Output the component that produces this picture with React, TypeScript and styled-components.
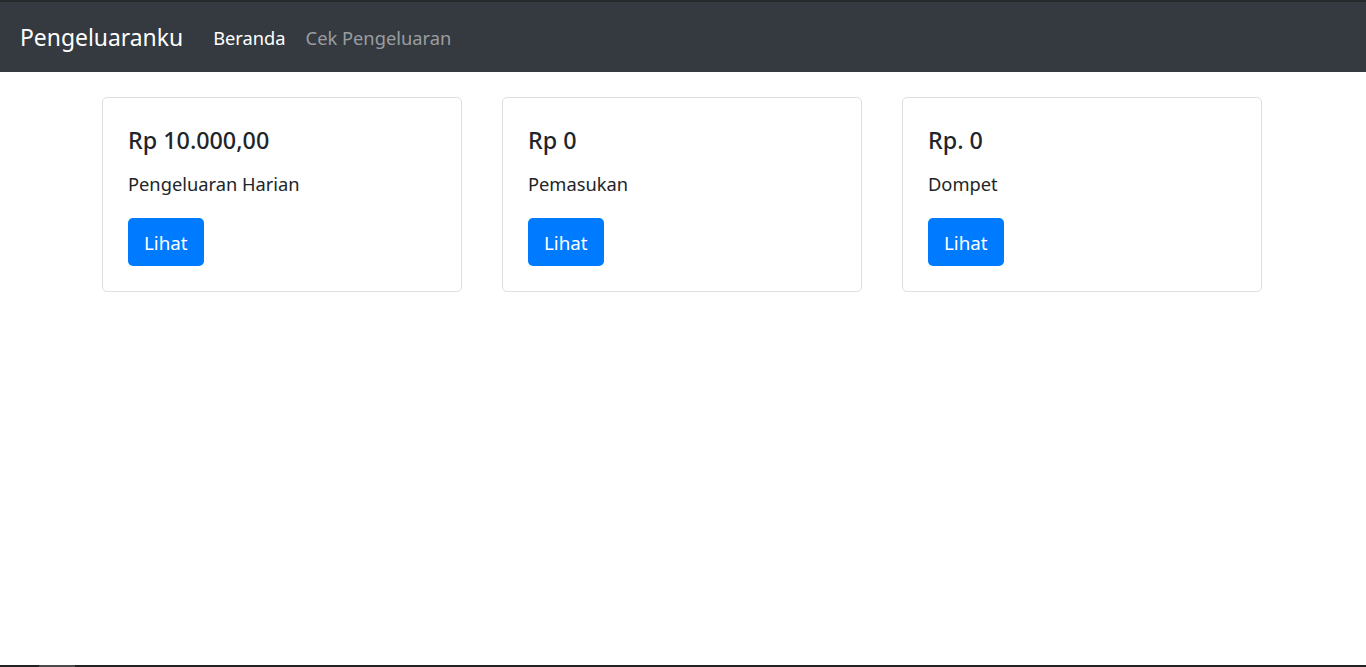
import styled, { createGlobalStyle } from "styled-components"

const GlobalStyle = createGlobalStyle`
  * {
    box-sizing: border-box;
  }
  body {
    margin: 0;
    font-family: "Noto Sans", "Open Sans", Arial, sans-serif;
    font-size: 18.3px;
    line-height: 30px;
    color: #212529;
    background: #fff;
  }
`

const Page = styled.div`
  display: flex;
  flex-direction: column;
  min-height: 667px;
`

const FrameTop = styled.div`
  height: 2px;
  background: #26292b;
`

const Navbar = styled.nav`
  display: flex;
  align-items: center;
  height: 70px;
  padding: 10px 20px;
  background: #343a40;
`

const Brand = styled.a`
  font-size: 22.9px;
  line-height: 37.5px;
  padding: 7px 0 5px;
  margin-right: 20px;
  color: #fff;
  text-decoration: none;
  white-space: nowrap;
`

const NavLinks = styled.div`
  display: flex;
`

const NavLink = styled.a<{ $active?: boolean }>`
  padding: 11px 10px 9px;
  color: ${(p) => (p.$active ? "#fff" : "rgba(255, 255, 255, 0.5)")};
  text-decoration: none;
  white-space: nowrap;
`

const Main = styled.main`
  flex: 1;
  padding: 25px 2px 0 0;
`

const CardRow = styled.div`
  display: grid;
  grid-template-columns: repeat(3, 360px);
  gap: 40px;
  justify-content: center;
`

const Card = styled.div`
  border: 1px solid rgba(0, 0, 0, 0.125);
  border-radius: 5px;
  padding: 25px;
`

const CardTitle = styled.h5`
  margin: 0 0 15px;
  padding-top: 2px;
  height: 30px;
  font-size: 23.3px;
  font-weight: 500;
  line-height: 30px;
`

const CardText = styled.p`
  margin: 0 0 20px;
  padding-top: 1px;
  height: 30px;
`

const Button = styled.a`
  display: inline-block;
  padding: 10px 16px 8px;
  height: 48px;
  border-radius: 5px;
  background: #007bff;
  color: #fff;
  font-size: 18.8px;
  text-decoration: none;
`

const FrameBottom = styled.div`
  display: flex;
  height: 2px;
  background: #222;
`

const FrameTab = styled.span`
  width: 36px;
  margin-left: 39px;
  background: #4a4a4a;
`

const cards = [
  { amount: "Rp 10.000,00", label: "Pengeluaran Harian" },
  { amount: "Rp 0", label: "Pemasukan" },
  { amount: "Rp. 0", label: "Dompet" },
]

export default function App() {
  return (
    <>
      <GlobalStyle />
      <Page>
        <FrameTop />
        <Navbar>
          <Brand href="#">Pengeluaranku</Brand>
          <NavLinks>
            <NavLink href="#" $active>Beranda</NavLink>
            <NavLink href="#">Cek Pengeluaran</NavLink>
          </NavLinks>
        </Navbar>
        <Main>
          <CardRow>
            {cards.map((c) => (
              <Card key={c.label}>
                <CardTitle>{c.amount}</CardTitle>
                <CardText>{c.label}</CardText>
                <Button href="#">Lihat</Button>
              </Card>
            ))}
          </CardRow>
        </Main>
        <FrameBottom>
          <FrameTab />
        </FrameBottom>
      </Page>
    </>
  )
}
